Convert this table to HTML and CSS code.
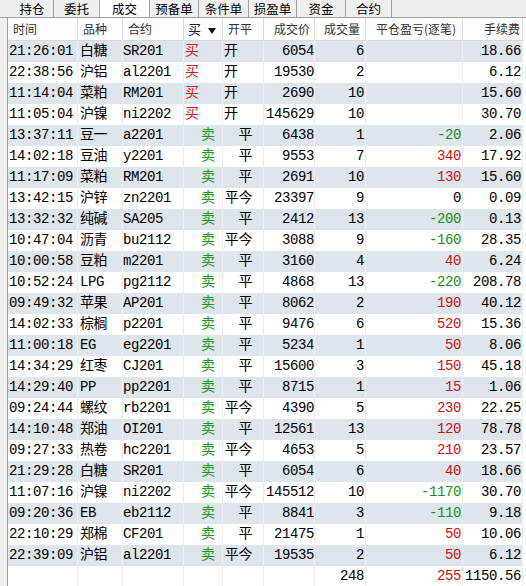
FILE: index.html
```html
<!DOCTYPE html>
<html>
<head>
<meta charset="utf-8">
<link rel="stylesheet" href="styles.css">
</head>
<body>
<div class="tabs">
  <div class="tab t-first">持仓</div>
  <div class="tab t2">委托</div>
  <div class="tab t3 active">成交</div>
  <div class="tab t4">预备单</div>
  <div class="tab t5">条件单</div>
  <div class="tab t6">损盈单</div>
  <div class="tab t7">资金</div>
  <div class="tab t8">合约</div>
</div>
<div class="panel">
<table class="grid">
<thead>
<tr>
  <th class="c1">时间</th>
  <th class="c2">品种</th>
  <th class="c3">合约</th>
  <th class="c4">买<svg class="sort" width="8" height="6" viewBox="0 0 8 6"><path d="M0 0H8L4 6Z" fill="#111"/></svg></th>
  <th class="c5">开平</th>
  <th class="c6">成交价</th>
  <th class="c7">成交量</th>
  <th class="c8">平仓盈亏(逐笔)</th>
  <th class="c9">手续费</th>
</tr>
</thead>
<tbody>
<tr class="alt"><td class="c1">21:26:01</td><td class="c2">白糖</td><td class="c3">SR201</td><td class="c4 buy">买</td><td class="c5 kai">开</td><td class="c6">6054</td><td class="c7">6</td><td class="c8"></td><td class="c9">18.66</td></tr>
<tr><td class="c1">22:38:56</td><td class="c2">沪铝</td><td class="c3">al2201</td><td class="c4 buy">买</td><td class="c5 kai">开</td><td class="c6">19530</td><td class="c7">2</td><td class="c8"></td><td class="c9">6.12</td></tr>
<tr class="alt"><td class="c1">11:14:04</td><td class="c2">菜粕</td><td class="c3">RM201</td><td class="c4 buy">买</td><td class="c5 kai">开</td><td class="c6">2690</td><td class="c7">10</td><td class="c8"></td><td class="c9">15.60</td></tr>
<tr><td class="c1">11:05:04</td><td class="c2">沪镍</td><td class="c3">ni2202</td><td class="c4 buy">买</td><td class="c5 kai">开</td><td class="c6">145629</td><td class="c7">10</td><td class="c8"></td><td class="c9">30.70</td></tr>
<tr class="alt"><td class="c1">13:37:11</td><td class="c2">豆一</td><td class="c3">a2201</td><td class="c4 sell">卖</td><td class="c5 ping">平</td><td class="c6">6438</td><td class="c7">1</td><td class="c8 neg">-20</td><td class="c9">2.06</td></tr>
<tr><td class="c1">14:02:18</td><td class="c2">豆油</td><td class="c3">y2201</td><td class="c4 sell">卖</td><td class="c5 ping">平</td><td class="c6">9553</td><td class="c7">7</td><td class="c8 pos">340</td><td class="c9">17.92</td></tr>
<tr class="alt"><td class="c1">11:17:09</td><td class="c2">菜粕</td><td class="c3">RM201</td><td class="c4 sell">卖</td><td class="c5 ping">平</td><td class="c6">2691</td><td class="c7">10</td><td class="c8 pos">130</td><td class="c9">15.60</td></tr>
<tr><td class="c1">13:42:15</td><td class="c2">沪锌</td><td class="c3">zn2201</td><td class="c4 sell">卖</td><td class="c5 ping">平今</td><td class="c6">23397</td><td class="c7">9</td><td class="c8">0</td><td class="c9">0.09</td></tr>
<tr class="alt"><td class="c1">13:32:32</td><td class="c2">纯碱</td><td class="c3">SA205</td><td class="c4 sell">卖</td><td class="c5 ping">平</td><td class="c6">2412</td><td class="c7">13</td><td class="c8 neg">-200</td><td class="c9">0.13</td></tr>
<tr><td class="c1">10:47:04</td><td class="c2">沥青</td><td class="c3">bu2112</td><td class="c4 sell">卖</td><td class="c5 ping">平今</td><td class="c6">3088</td><td class="c7">9</td><td class="c8 neg">-160</td><td class="c9">28.35</td></tr>
<tr class="alt"><td class="c1">10:00:58</td><td class="c2">豆粕</td><td class="c3">m2201</td><td class="c4 sell">卖</td><td class="c5 ping">平</td><td class="c6">3160</td><td class="c7">4</td><td class="c8 pos">40</td><td class="c9">6.24</td></tr>
<tr><td class="c1">10:52:24</td><td class="c2">LPG</td><td class="c3">pg2112</td><td class="c4 sell">卖</td><td class="c5 ping">平</td><td class="c6">4868</td><td class="c7">13</td><td class="c8 neg">-220</td><td class="c9">208.78</td></tr>
<tr class="alt"><td class="c1">09:49:32</td><td class="c2">苹果</td><td class="c3">AP201</td><td class="c4 sell">卖</td><td class="c5 ping">平</td><td class="c6">8062</td><td class="c7">2</td><td class="c8 pos">190</td><td class="c9">40.12</td></tr>
<tr><td class="c1">14:02:33</td><td class="c2">棕榈</td><td class="c3">p2201</td><td class="c4 sell">卖</td><td class="c5 ping">平</td><td class="c6">9476</td><td class="c7">6</td><td class="c8 pos">520</td><td class="c9">15.36</td></tr>
<tr class="alt"><td class="c1">11:00:18</td><td class="c2">EG</td><td class="c3">eg2201</td><td class="c4 sell">卖</td><td class="c5 ping">平</td><td class="c6">5234</td><td class="c7">1</td><td class="c8 pos">50</td><td class="c9">8.06</td></tr>
<tr><td class="c1">14:34:29</td><td class="c2">红枣</td><td class="c3">CJ201</td><td class="c4 sell">卖</td><td class="c5 ping">平</td><td class="c6">15600</td><td class="c7">3</td><td class="c8 pos">150</td><td class="c9">45.18</td></tr>
<tr class="alt"><td class="c1">14:29:40</td><td class="c2">PP</td><td class="c3">pp2201</td><td class="c4 sell">卖</td><td class="c5 ping">平</td><td class="c6">8715</td><td class="c7">1</td><td class="c8 pos">15</td><td class="c9">1.06</td></tr>
<tr><td class="c1">09:24:44</td><td class="c2">螺纹</td><td class="c3">rb2201</td><td class="c4 sell">卖</td><td class="c5 ping">平今</td><td class="c6">4390</td><td class="c7">5</td><td class="c8 pos">230</td><td class="c9">22.25</td></tr>
<tr class="alt"><td class="c1">14:10:48</td><td class="c2">郑油</td><td class="c3">OI201</td><td class="c4 sell">卖</td><td class="c5 ping">平</td><td class="c6">12561</td><td class="c7">13</td><td class="c8 pos">120</td><td class="c9">78.78</td></tr>
<tr><td class="c1">09:27:33</td><td class="c2">热卷</td><td class="c3">hc2201</td><td class="c4 sell">卖</td><td class="c5 ping">平今</td><td class="c6">4653</td><td class="c7">5</td><td class="c8 pos">210</td><td class="c9">23.57</td></tr>
<tr class="alt"><td class="c1">21:29:28</td><td class="c2">白糖</td><td class="c3">SR201</td><td class="c4 sell">卖</td><td class="c5 ping">平</td><td class="c6">6054</td><td class="c7">6</td><td class="c8 pos">40</td><td class="c9">18.66</td></tr>
<tr><td class="c1">11:07:16</td><td class="c2">沪镍</td><td class="c3">ni2202</td><td class="c4 sell">卖</td><td class="c5 ping">平今</td><td class="c6">145512</td><td class="c7">10</td><td class="c8 neg">-1170</td><td class="c9">30.70</td></tr>
<tr class="alt"><td class="c1">09:20:36</td><td class="c2">EB</td><td class="c3">eb2112</td><td class="c4 sell">卖</td><td class="c5 ping">平</td><td class="c6">8841</td><td class="c7">3</td><td class="c8 neg">-110</td><td class="c9">9.18</td></tr>
<tr><td class="c1">22:10:29</td><td class="c2">郑棉</td><td class="c3">CF201</td><td class="c4 sell">卖</td><td class="c5 ping">平</td><td class="c6">21475</td><td class="c7">1</td><td class="c8 pos">50</td><td class="c9">10.06</td></tr>
<tr class="alt"><td class="c1">22:39:09</td><td class="c2">沪铝</td><td class="c3">al2201</td><td class="c4 sell">卖</td><td class="c5 ping">平今</td><td class="c6">19535</td><td class="c7">2</td><td class="c8 pos">50</td><td class="c9">6.12</td></tr>
<tr class="total"><td class="c1"></td><td class="c2"></td><td class="c3"></td><td class="c4"></td><td class="c5"></td><td class="c6"></td><td class="c7">248</td><td class="c8 pos">255</td><td class="c9">1150.56</td></tr>
</tbody>
</table>
</div>
</body>
</html>
```

FILE: styles.css
```css
* { box-sizing: border-box; }
html, body { margin: 0; padding: 0; }
body {
  width: 526px;
  height: 586px;
  overflow: hidden;
  background: #f0f0f0;
  font-family: "Noto Sans CJK SC", sans-serif;
  color: #000;
}

/* tab strip */
.tabs {
  display: flex;
  height: 18px;
  border-bottom: 1px solid #a0a0a0;
  background: #f0f0f0;
}
.tab {
  height: 17px;
  border-right: 1px solid #a0a0a0;
  font-size: 12.5px;
  line-height: 17px;
  text-align: center;
  color: #000;
  white-space: nowrap;
}
.tab.active { background: #fff; }
.t-first { width: 54px; padding-left: 11px; }
.t2 { width: 46px; }
.t3 { width: 50px; }
.t4 { width: 49px; }
.t5 { width: 50px; }
.t6 { width: 48px; }
.t7 { width: 49px; }
.t8 { width: 46px; }

/* grid panel */
.panel {
  margin-left: 7px;
  height: 568px;
  border-left: 1px solid #a0a0a0;
  background: #fff;
  overflow: hidden;
}
.grid {
  border-collapse: separate;
  border-spacing: 0;
  table-layout: fixed;
  width: 515px;
}
.grid th {
  height: 23px;
  padding: 0 5px;
  border-right: 1px solid #dcdcdc;
  border-bottom: 1px solid #d8d8d8;
  background: #fdfdfd;
  font-weight: normal;
  font-size: 12px;
  line-height: 22px;
  color: #333;
  white-space: nowrap;
  text-align: left;
  overflow: hidden;
}
.grid td {
  height: 21px;
  padding: 0;
  border-right: 1px solid #ececec;
  font-family: "Liberation Mono", "Noto Sans CJK SC", monospace;
  font-size: 14px;
  letter-spacing: -0.4px;
  line-height: 21px;
  white-space: nowrap;
  overflow: hidden;
}
.grid tr.alt td { background: #dfe5ed; border-right-color: #eef1f5; }

.c1 { width: 70px; }
.c2 { width: 45px; }
.c3 { width: 61px; }
.c4 { width: 39px; }
.c5 { width: 41px; }
.c6 { width: 51px; }
.c7 { width: 51px; }
.c8 { width: 97px; }
.c9 { width: 60px; }

.grid th.c4 { padding-left: 4px; font-size: 13px; color: #222; }
.grid th.c6 { text-align: right; padding-right: 4px; }
.grid th.c7 { text-align: right; padding-right: 5px; }
.grid th.c8 { text-align: right; padding-right: 6px; }
.grid th.c9 { text-align: right; padding-right: 2px; }
.sort { margin-left: 7px; vertical-align: 0; }

.grid td.c1 { padding-left: 1px; }
.grid td.c2 { padding-left: 2px; }
.grid td.c3 { padding-left: 0; }
.grid td.c6 { text-align: right; padding-right: 0; }
.grid td.c7,
.grid td.c8,
.grid td.c9 { text-align: right; padding-right: 1px; }

.grid td.buy { color: #d01c1c; padding-left: 1px; }
.grid td.sell { color: #1a9a1a; padding-left: 17px; }
.grid td.kai { padding-left: 1px; }
.grid td.ping { text-align: right; padding-right: 11px; }
.grid td.pos { color: #d01010; }
.grid td.neg { color: #11911a; }
```
